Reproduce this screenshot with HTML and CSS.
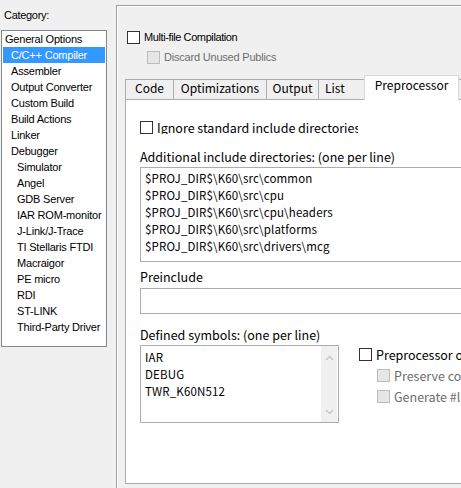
FILE: index.html
```
<!DOCTYPE html>
<html lang="en">
  <head>
    <meta charset="UTF-8" />
    <title>Options for node</title>
    <link rel="stylesheet" href="styles.css">
  </head>
  <body>
    <div class="window">
      <div class="sidebar">
        <div class="cat-label">Category:</div>
        <ul class="cat-list">
          <li class="lvl0">General Options</li>
          <li class="lvl1 active">C/C++ Compiler</li>
          <li class="lvl1">Assembler</li>
          <li class="lvl1">Output Converter</li>
          <li class="lvl1">Custom Build</li>
          <li class="lvl1">Build Actions</li>
          <li class="lvl1">Linker</li>
          <li class="lvl1">Debugger</li>
          <li class="lvl2">Simulator</li>
          <li class="lvl2">Angel</li>
          <li class="lvl2">GDB Server</li>
          <li class="lvl2">IAR ROM-monitor</li>
          <li class="lvl2">J-Link/J-Trace</li>
          <li class="lvl2">TI Stellaris FTDI</li>
          <li class="lvl2">Macraigor</li>
          <li class="lvl2">PE micro</li>
          <li class="lvl2">RDI</li>
          <li class="lvl2">ST-LINK</li>
          <li class="lvl2">Third-Party Driver</li>
        </ul>
      </div>

      <div class="options">
        <div class="check top-check"><span class="box"></span>Multi-file Compilation</div>
        <div class="check top-check sub disabled"><span class="box"></span>Discard Unused Publics</div>

        <div class="tabs">
          <div class="tab w-code">Code</div>
          <div class="tab w-opt">Optimizations</div>
          <div class="tab w-out">Output</div>
          <div class="tab w-list">List</div>
          <div class="tab w-pre active">Preprocessor</div>
          <div class="tab w-diag">Diagnostics</div>
        </div>

        <div class="tab-panel">
          <div class="check ignore"><span class="box"></span>Ignore standard include directories</div>

          <div class="field-label first">Additional include directories: (one per line)</div>
          <div class="text-box includes">
            <div>$PROJ_DIR$\K60\src\common</div>
            <div>$PROJ_DIR$\K60\src\cpu</div>
            <div>$PROJ_DIR$\K60\src\cpu\headers</div>
            <div>$PROJ_DIR$\K60\src\platforms</div>
            <div>$PROJ_DIR$\K60\src\drivers\mcg</div>
          </div>

          <div class="field-label">Preinclude</div>
          <div class="text-box preinclude"></div>

          <div class="field-label defined">Defined symbols: (one per line)</div>
          <div class="lower">
            <div class="text-box symbols">
              <div class="lines">
                <div>IAR</div>
                <div>DEBUG</div>
                <div>TWR_K60N512</div>
              </div>
              <div class="scrollbar">
                <svg width="9" height="6" viewBox="0 0 9 6"><path d="M1 5 L4.5 1.5 L8 5" fill="none" stroke="#c2c2c2" stroke-width="1.2"/></svg>
                <svg width="9" height="6" viewBox="0 0 9 6"><path d="M1 1 L4.5 4.5 L8 1" fill="none" stroke="#c2c2c2" stroke-width="1.2"/></svg>
              </div>
            </div>
            <div class="pre-opts">
              <div class="check"><span class="box"></span>Preprocessor output to file</div>
              <div class="check sub disabled"><span class="box"></span>Preserve comments</div>
              <div class="check sub disabled"><span class="box"></span>Generate #line directives</div>
            </div>
          </div>
        </div>
      </div>
    </div>
  </body>
</html>
```

FILE: styles.css
```
html,
body {
  margin: 0;
  height: 488px;
  overflow: hidden;
  background: #f0f0f0;
}

.window {
  display: flex;
  width: 461px;
  height: 488px;
  overflow: hidden;
  font-family: "Liberation Sans", Arial, sans-serif;
  font-size: 11px;
  color: #000;
}

/* left category tree */
.sidebar {
  width: 116px;
  flex: none;
}

.cat-label {
  margin: 8px 0 0 4px;
  line-height: 14px;
  letter-spacing: -0.3px;
}

.cat-list {
  list-style: none;
  margin: 8px 0 0 1px;
  padding: 0 1px;
  width: 106px;
  height: 317px;
  box-sizing: border-box;
  background: #fff;
  border: 1px solid #828790;
}

.cat-list li {
  height: 16px;
  line-height: 16px;
  white-space: nowrap;
  letter-spacing: -0.2px;
}

.cat-list .lvl0 {
  padding-left: 2px;
}

.cat-list .lvl1 {
  padding-left: 8px;
}

.cat-list .lvl2 {
  padding-left: 14px;
}

.cat-list .active {
  background: #3399ff;
  color: #fff;
}

/* right options page */
.options {
  margin-top: 5px;
  width: 420px;
  flex: none;
  border-top: 1px solid #a0a0a0;
  border-left: 1px solid #a0a0a0;
  box-shadow: inset 1px 1px 0 #fff;
}

.check {
  display: flex;
  align-items: center;
  height: 13px;
  line-height: 13px;
  white-space: nowrap;
}

.check .box {
  width: 11px;
  height: 11px;
  border: 1px solid #333;
  background: #fff;
  margin-right: 4px;
  flex: none;
}

.check.disabled {
  color: #6d6d6d;
}

.check.disabled .box {
  border-color: #bcbcbc;
  background: #e6e6e6;
}

.top-check {
  margin: 25px 0 0 10px;
  letter-spacing: -0.4px;
}

.top-check.sub {
  margin: 7px 0 0 30px;
  letter-spacing: -0.2px;
}

.tabs {
  display: flex;
  align-items: flex-end;
  height: 24px;
  margin: 11px 0 0 8px;
  font-family: "Noto Sans CJK SC", "Noto Sans", sans-serif;
  font-size: 12px;
}

.tab {
  height: 20px;
  line-height: 13px;
  box-sizing: border-box;
  margin-right: -1px;
  padding-top: 1px;
  border: 1px solid #acacac;
  border-bottom: none;
  background: #f0f0f0;
  text-align: center;
  white-space: nowrap;
}

.tab.active {
  position: relative;
  z-index: 1;
  height: 25px;
  line-height: 15px;
  margin-bottom: -1px;
  background: #fff;
  border-color: #d9d9d9;
}

.w-code { width: 49px; }
.w-opt { width: 94px; }
.w-out { width: 53px; }
.w-list { width: 47px; text-align: left; padding-left: 6px; }
.w-pre { width: 95px; }
.w-diag { width: 80px; }

.tab-panel {
  margin-left: 8px;
  height: 385px;
  box-sizing: border-box;
  padding-left: 14px;
  background: #fff;
  border: 1px solid #adadad;
  border-right: none;
  font-family: "Noto Sans CJK SC", "Noto Sans", sans-serif;
  font-size: 12.5px;
}

.tab-panel .ignore {
  padding-top: 21px;
  width: 218px;
  overflow: hidden;
}

.field-label {
  margin-top: 7px;
  line-height: 16px;
  white-space: nowrap;
}

.field-label.first {
  margin-top: 15px;
}

.field-label.defined {
  margin-top: 13px;
}

.text-box {
  box-sizing: border-box;
  border: 1px solid #abadb3;
  background: #fff;
  font-size: 11.5px;
}

.includes {
  margin-top: 2px;
  height: 95px;
  padding: 2px 0 0 4px;
  line-height: 17px;
  white-space: nowrap;
  letter-spacing: 0.15px;
}

.preinclude {
  margin-top: 3px;
  height: 26px;
}

.lower {
  display: flex;
  margin-top: 2px;
}

.symbols {
  display: flex;
  width: 199px;
  height: 78px;
  flex: none;
}

.symbols .lines {
  flex: 1;
  padding: 3px 0 0 4px;
  line-height: 17px;
  letter-spacing: 0.15px;
}

.scrollbar {
  width: 16px;
  margin-right: 1px;
  background: #f0f0f0;
  display: flex;
  flex-direction: column;
  justify-content: space-between;
  align-items: center;
  padding: 9px 0 7px;
  box-sizing: border-box;
}

.pre-opts {
  margin: 3px 0 0 20px;
}

.pre-opts .sub {
  margin: 8px 0 0 18px;
}
```
